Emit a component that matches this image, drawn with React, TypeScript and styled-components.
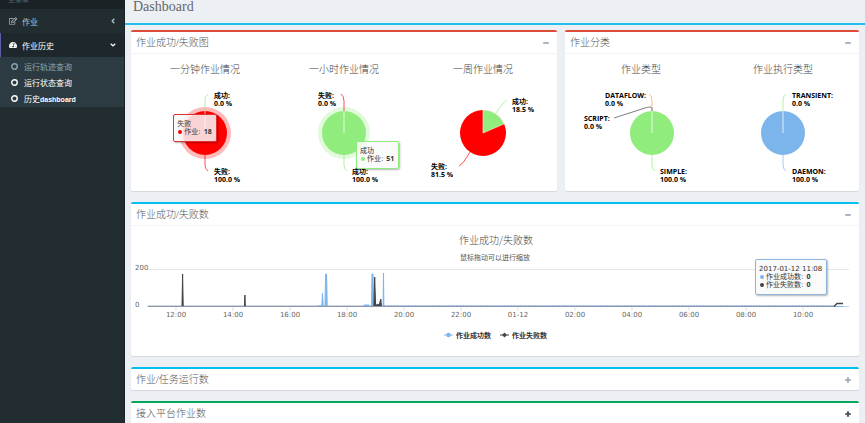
import React from "react";
import styled, { createGlobalStyle } from "styled-components";
import {
  FaAngleDown,
  FaAngleLeft,
  FaMinus,
  FaPlus,
  FaRegEdit,
  FaTachometerAlt,
} from "react-icons/fa";

const cjk = '"Noto Sans CJK SC", sans-serif';
const green = "#90ed7d";
const blue = "#7cb5ec";
const black = "#434348";
const red = "#ff0000";

const GlobalStyle = createGlobalStyle`
  * { box-sizing: border-box; }
  body {
    margin: 0;
    background: #ecf0f5;
    font-family: "Liberation Sans", ${cjk};
  }
`;

const Page = styled.div`
  display: grid;
  grid-template-columns: 125px minmax(0, 1fr);
  height: 100vh;
  overflow: hidden;
`;

const Sidebar = styled.nav`
  background: #222d32;
  border-right: 1px solid #1a2226;
  font-size: 8px;
`;

const SidebarHeading = styled.div`
  display: flex;
  align-items: flex-end;
  height: 9px;
  padding: 0 8px 5px;
  background: #1a2226;
  color: #4b646f;
  font-size: 7px;
  line-height: 8px;
  overflow: hidden;
`;

const MenuLink = styled.a<{ $active?: boolean }>`
  display: flex;
  align-items: center;
  gap: 5px;
  height: 24px;
  padding: 0 7px 0 8px;
  border-left: 1px solid ${(p) => (p.$active ? "#605ca8" : "transparent")};
  background: ${(p) => (p.$active ? "#1e282c" : "transparent")};
  color: ${(p) => (p.$active ? "#fff" : "#b8c7ce")};
  text-decoration: none;
  > span {
    flex: 1;
  }
`;

const SubMenu = styled.ul`
  margin: 0;
  padding: 1px 0;
  background: #2c3b41;
  list-style: none;
`;

const SubLink = styled.a<{ $bright?: boolean }>`
  display: flex;
  align-items: center;
  gap: 6px;
  height: 16px;
  padding-left: 11px;
  color: ${(p) => (p.$bright ? "#fff" : "#8aa4af")};
  text-decoration: none;
  b {
    font-size: 7px;
  }
`;

const Ring = styled.svg`
  width: 7px;
  height: 7px;
`;

const Main = styled.main`
  min-width: 0;
`;

const PageHeader = styled.header`
  height: 25px;
  padding-left: 8px;
  border-bottom: 2px solid #20c0ec;
`;

const PageTitle = styled.h1`
  margin: 0;
  color: #666;
  font: 400 14px/13px "Liberation Serif", serif;
`;

const Content = styled.div`
  display: flex;
  flex-direction: column;
  gap: 11px;
  padding: 5px 6px;
`;

const Row = styled.div`
  display: grid;
  grid-template-columns: 426fr 294fr;
  gap: 8px;
`;

const Box = styled.section<{ $accent: string }>`
  min-width: 0;
  border-top: 2px solid ${(p) => p.$accent};
  border-radius: 2px;
  background: #fff;
  box-shadow: 0 1px 1px rgba(0, 0, 0, 0.1);
`;

const BoxHeader = styled.div<{ $open?: boolean }>`
  display: flex;
  align-items: center;
  justify-content: space-between;
  height: ${(p) => (p.$open ? 22 : 21)}px;
  padding: 0 6px 0 5px;
  border-bottom: ${(p) => (p.$open ? "1px solid #f4f4f4" : "0")};
`;

const BoxTitle = styled.h3`
  margin: 0;
  color: #555;
  font: 300 10px/16px "Liberation Serif", ${cjk};
`;

const ToggleButton = styled.button<{ $dark?: boolean }>`
  display: flex;
  padding: 2px;
  border: 0;
  background: none;
  color: ${(p) => (p.$dark ? "#333c48" : "#97a0b3")};
  font-size: 6px;
  svg {
    stroke: currentColor;
    stroke-width: 50px;
    overflow: visible;
  }
`;

const PieBody = styled.div<{ $columns: number }>`
  display: grid;
  grid-template-columns: repeat(${(p) => p.$columns}, minmax(0, 1fr));
  height: 137px;
  padding: 0 5px;
`;

const PieCell = styled.div`
  position: relative;
  display: flex;
  justify-content: center;
`;

const PieSvg = styled.svg`
  flex: none;
  width: 138px;
  height: 136px;
  overflow: visible;
`;

const ChartTitle = styled.text`
  fill: #444;
  font: 300 10px ${cjk};
  text-anchor: middle;
`;

const DataLabel = styled.text`
  fill: #000;
  font: 700 7px "Open Sans", ${cjk};
`;

const AxisLabel = styled.text<{ $start?: boolean }>`
  fill: #666;
  font: 7px "DejaVu Sans", sans-serif;
  text-anchor: ${(p) => (p.$start ? "start" : "middle")};
`;

const Subtitle = styled.text`
  fill: #555;
  font: 7px ${cjk};
  text-anchor: middle;
`;

const LegendText = styled.text`
  fill: #333;
  font: 700 7px ${cjk};
`;

const Tooltip = styled.div<{ $color: string; $left: string; $top: string }>`
  position: absolute;
  left: ${(p) => p.$left};
  top: ${(p) => p.$top};
  padding: 5px 4px 5px 3px;
  border: 1px solid ${(p) => p.$color};
  border-radius: 2px;
  background: rgba(249, 249, 249, 0.85);
  box-shadow: 1px 1px 2px rgba(0, 0, 0, 0.3);
  color: #333;
  font: 7px/8px "DejaVu Sans", ${cjk};
  white-space: nowrap;
`;

const TooltipRow = styled.div`
  display: flex;
  align-items: center;
  gap: 2px;
  b {
    margin-left: 1px;
    font-family: "Open Sans", sans-serif;
  }
`;

const Dot = styled.i<{ $color: string }>`
  width: 4px;
  height: 4px;
  margin-left: 1px;
  border-radius: 50%;
  background: ${(p) => p.$color};
`;

const LineBody = styled.div`
  position: relative;
`;

const LineSvg = styled.svg`
  display: block;
  width: 100%;
  height: auto;
`;

function RingIcon() {
  return (
    <Ring viewBox="0 0 14 14" aria-hidden="true">
      <circle cx="7" cy="7" r="5.5" fill="none" stroke="currentColor" strokeWidth="2.8" />
    </Ring>
  );
}

type LabelData = { x: number; y: number; name: string; value: string };
type Connector = { d: string; color: string };

type PieProps = {
  title: string;
  color: string;
  cx?: number;
  r?: number;
  halo?: boolean;
  slice?: string;
  labels: LabelData[];
  connectors: Connector[];
  children?: React.ReactNode;
};

const CY = 79;

/* x = 0 is the middle of the cell, so every pie stays centred under its title */
function Pie({ title, color, cx = 0, r = 22, halo, slice, labels, connectors, children }: PieProps) {
  const end = (66.6 * Math.PI) / 180;
  return (
    <PieCell>
      <PieSvg viewBox="-69 0 138 136" role="img" aria-label={title}>
        <ChartTitle x="0" y="19">{title}</ChartTitle>
        {halo && <circle cx={cx} cy={CY} r={r + 4} fill={color} opacity="0.27" />}
        <circle cx={cx} cy={CY} r={r} fill={color} />
        {slice ? (
          <path
            d={`M${cx} ${CY}V${CY - r}A${r} ${r} 0 0 1 ${cx + r * Math.sin(end)} ${CY - r * Math.cos(end)}Z`}
            fill={slice}
            stroke="#fff"
            strokeWidth="0.6"
          />
        ) : (
          <path d={`M${cx} ${CY}V${CY - r}`} stroke="#fff" strokeWidth="1" opacity="0.75" />
        )}
        {connectors.map((c) => (
          <path key={c.d} d={c.d} fill="none" stroke={c.color} strokeWidth="0.7" />
        ))}
        {labels.map((l) => (
          <DataLabel key={l.name} x={l.x} y={l.y}>
            {l.name}:
            <tspan x={l.x} dy="8">{l.value}</tspan>
          </DataLabel>
        ))}
      </PieSvg>
      {children}
    </PieCell>
  );
}

const upRight = "M0 57V47Q0 42 3 40";
const upLeft = "M0 57V47Q0 42 -3 40";
const downRight = "M0 101V111Q0 115 3 117";

const hours = ["12:00", "14:00", "16:00", "18:00", "20:00", "22:00", "01-12", "02:00", "04:00", "06:00", "08:00", "10:00"];

function LineChart() {
  return (
    <LineBody>
      <LineSvg viewBox="0 0 728 130" role="img" aria-label="作业成功/失败数">
        <ChartTitle x="365" y="18">作业成功/失败数</ChartTitle>
        <Subtitle x="364" y="34">鼠标拖动可以进行缩放</Subtitle>
        <path d="M17 43.5H718" stroke="#e6e6e6" />
        <AxisLabel $start x="4" y="44">200</AxisLabel>
        <AxisLabel $start x="4" y="81">0</AxisLabel>
        <path d="M16 80.5H718" stroke="#ccd6eb" />
        {hours.map((h, i) => (
          <g key={h}>
            <path d={`M${45 + i * 57} 80V85`} stroke="#ccd6eb" strokeWidth="0.7" />
            <AxisLabel x={45 + i * 57} y="91">{h}</AxisLabel>
          </g>
        ))}
        <path d="M17 80.2H704" stroke="#6e7d92" strokeWidth="1" />
        <path d="M253 79.5H704" stroke="#7cb5ec" strokeWidth="0.6" strokeDasharray="2 1" />
        <path
          d="M190.8 80L191.5 67L192.2 80M194 80L194.6 48H195.6L196.2 80M240.5 80L241 48H242L242.8 80M252.1 80L252.5 47L252.9 80"
          fill={blue}
          stroke={blue}
        />
        <path d="M187 79.8H190M233 80V79H238V80M704 80.5H712" fill={blue} stroke={blue} />
        <path
          d="M51 80L51.6 48L52.2 80M113.5 80L113.9 69L114.3 80M242.9 80L243.7 51L244.6 79.5L247 78L248 80L249.8 73L250.4 80"
          fill={black}
          stroke={black}
        />
        <path d="M703 80.5L706 77.5H712" fill="none" stroke={black} strokeWidth="1.4" />
        <path d="M313 109H322" stroke={blue} />
        <circle cx="317.5" cy="109" r="2.2" fill={blue} />
        <LegendText x="325" y="112">作业成功数</LegendText>
        <path d="M369 109H378" stroke={black} />
        <path d="M373.5 106.6L375.9 109L373.5 111.4L371.1 109Z" fill={black} />
        <LegendText x="381" y="112">作业失败数</LegendText>
      </LineSvg>
      <Tooltip $color="#8db4dc" $left="calc(86% - 2px)" $top="33px">
        <div>2017-01-12 11:08</div>
        <TooltipRow><Dot $color={blue} />作业成功数: <b>0</b></TooltipRow>
        <TooltipRow><Dot $color={black} />作业失败数: <b>0</b></TooltipRow>
      </Tooltip>
    </LineBody>
  );
}

type PanelProps = { title: string; accent: string; dark?: boolean; children?: React.ReactNode };

function Panel({ title, accent, dark, children }: PanelProps) {
  const open = Boolean(children);
  return (
    <Box $accent={accent}>
      <BoxHeader $open={open}>
        <BoxTitle>{title}</BoxTitle>
        <ToggleButton type="button" $dark={dark} aria-label={open ? "收起" : "展开"}>
          {open ? <FaMinus /> : <FaPlus />}
        </ToggleButton>
      </BoxHeader>
      {children}
    </Box>
  );
}

export default function App() {
  return (
    <>
      <GlobalStyle />
      <Page>
        <Sidebar>
          <SidebarHeading>主菜单</SidebarHeading>
          <MenuLink href="#jobs">
            <FaRegEdit />
            <span>作业</span>
            <FaAngleLeft />
          </MenuLink>
          <MenuLink href="#history" $active>
            <FaTachometerAlt />
            <span>作业历史</span>
            <FaAngleDown />
          </MenuLink>
          <SubMenu>
            <li><SubLink href="#trace"><RingIcon />运行轨迹查询</SubLink></li>
            <li><SubLink href="#status" $bright><RingIcon />运行状态查询</SubLink></li>
            <li><SubLink href="#dashboard" $bright><RingIcon /><span>历史<b>dashboard</b></span></SubLink></li>
          </SubMenu>
        </Sidebar>
        <Main>
          <PageHeader>
            <PageTitle>Dashboard</PageTitle>
          </PageHeader>
          <Content>
            <Row>
              <Panel title="作业成功/失败图" accent="#dd4b39">
                <PieBody $columns={3}>
                  <Pie
                    title="一分钟作业情况"
                    color={red}
                    halo
                    connectors={[{ d: upRight, color: green }, { d: downRight, color: red }]}
                    labels={[
                      { x: 9, y: 44, name: "成功", value: "0.0 %" },
                      { x: 9, y: 120, name: "失败", value: "100.0 %" },
                    ]}
                  >
                    <Tooltip $color="#d33" $left="calc(50% - 32px)" $top="60px">
                      <div>失败</div>
                      <TooltipRow><Dot $color={red} />作业: <b>18</b></TooltipRow>
                    </Tooltip>
                  </Pie>
                  <Pie
                    title="一小时作业情况"
                    color={green}
                    halo
                    connectors={[{ d: upLeft, color: red }, { d: downRight, color: green }]}
                    labels={[
                      { x: -26, y: 44, name: "失败", value: "0.0 %" },
                      { x: 8, y: 120, name: "成功", value: "100.0 %" },
                    ]}
                  >
                    <Tooltip $color={green} $left="calc(50% + 12px)" $top="87px">
                      <div>成功</div>
                      <TooltipRow><Dot $color={green} />作业: <b>51</b></TooltipRow>
                    </Tooltip>
                  </Pie>
                  <Pie
                    title="一周作业情况"
                    color={red}
                    slice={green}
                    r={23}
                    connectors={[
                      { d: "M13 59Q20 48 24 46", color: green },
                      { d: "M-13 98Q-20 110 -24 112", color: red },
                    ]}
                    labels={[
                      { x: 29, y: 50, name: "成功", value: "18.5 %" },
                      { x: -52, y: 115, name: "失败", value: "81.5 %" },
                    ]}
                  />
                </PieBody>
              </Panel>
              <Panel title="作业分类" accent="#dd4b39">
                <PieBody $columns={2}>
                  <Pie
                    title="作业类型"
                    color={green}
                    cx={11}
                    connectors={[
                      { d: "M11 57V47Q11 42 8 40", color: "#f7a35c" },
                      { d: "M-27 64L4 54Q10 52 11 54V57", color: black },
                      { d: "M11 101V111Q11 115 14 117", color: green },
                    ]}
                    labels={[
                      { x: -36, y: 44, name: "DATAFLOW", value: "0.0 %" },
                      { x: -57, y: 67, name: "SCRIPT", value: "0.0 %" },
                      { x: 19, y: 120, name: "SIMPLE", value: "100.0 %" },
                    ]}
                  />
                  <Pie
                    title="作业执行类型"
                    color={blue}
                    connectors={[{ d: upRight, color: green }, { d: downRight, color: blue }]}
                    labels={[
                      { x: 9, y: 44, name: "TRANSIENT", value: "0.0 %" },
                      { x: 9, y: 120, name: "DAEMON", value: "100.0 %" },
                    ]}
                  />
                </PieBody>
              </Panel>
            </Row>
            <Panel title="作业成功/失败数" accent="#00c0ef">
              <LineChart />
            </Panel>
            <Panel title="作业/任务运行数" accent="#00c0ef" />
            <Panel title="接入平台作业数" accent="#00a65a" dark />
          </Content>
        </Main>
      </Page>
    </>
  );
}
